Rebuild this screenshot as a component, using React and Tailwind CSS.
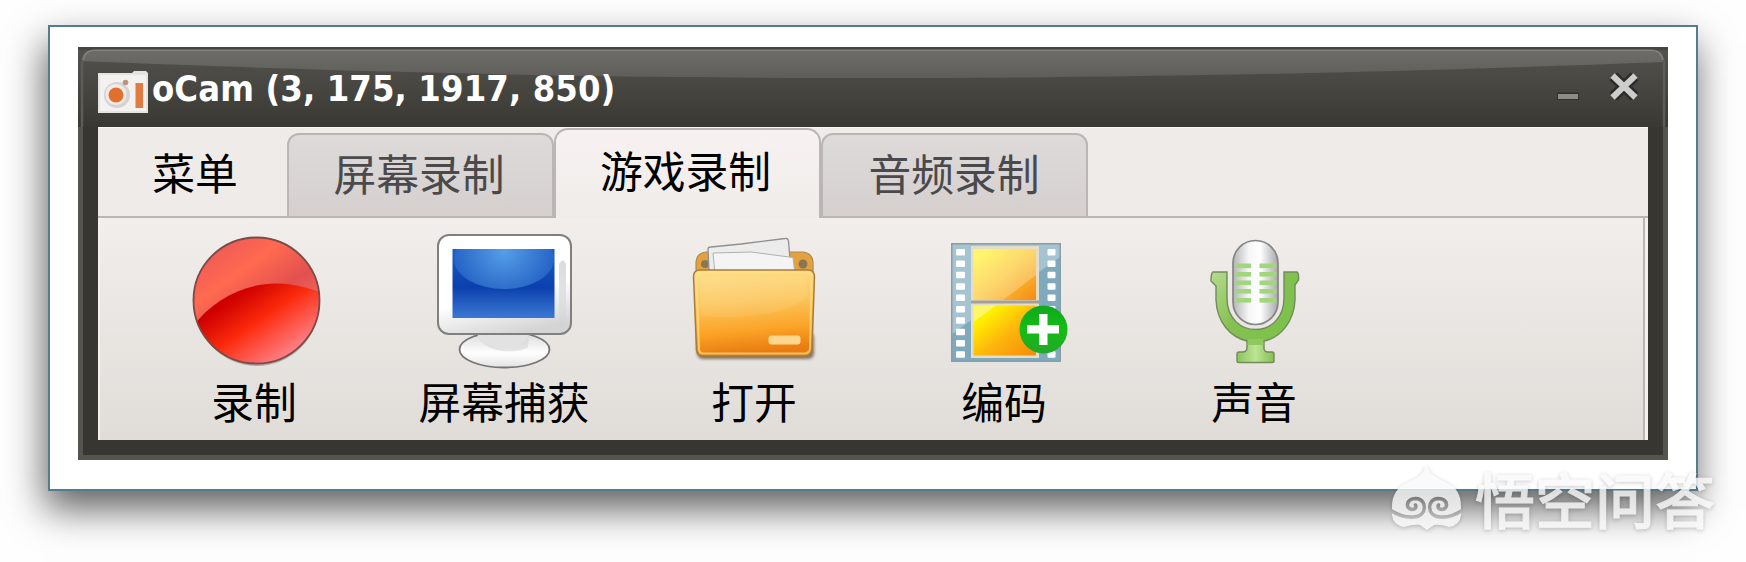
const cjk = "font-['Noto_Sans_CJK_SC',sans-serif]";

function AppLogo() {
  return (
    <svg className="h-[44px] w-[52px] shrink-0" viewBox="97 70 52 44">
      <path d="M98 73h34l2-2h12l2 2v40H98z" fill="#e6e3e3" />
      <path d="M100 75h46v36h-46z" fill="#f4f1f1" />
      <circle cx="117" cy="95" r="13" fill="#d6d3d4" />
      <circle cx="116" cy="94.500" r="10.500" fill="#f3ebe7" />
      <circle cx="116" cy="95" r="7.500" fill="#e0702c" />
      <circle cx="125.500" cy="82.500" r="2.800" fill="#c09284" />
      <rect x="135.500" y="83" width="7.500" height="25" fill="#e27a42" />
    </svg>
  );
}

function RecordIcon() {
  return (
    <svg className="h-[150px] w-[250px]" viewBox="129 225 250 150">
      <defs>
        <linearGradient id="recTop" x1="0.1" y1="0" x2="0.75" y2="0.9">
          <stop offset="0" stopColor="#e8525a" />
          <stop offset="0.35" stopColor="#ff6a50" />
          <stop offset="0.62" stopColor="#e2504f" />
          <stop offset="1" stopColor="#ff7a68" />
        </linearGradient>
        <linearGradient id="recLow" gradientUnits="userSpaceOnUse" x1="228" y1="290" x2="282" y2="368">
          <stop offset="0.1" stopColor="#cf0000" />
          <stop offset="0.45" stopColor="#fb2a0c" />
          <stop offset="0.9" stopColor="#ff7c80" />
        </linearGradient>
        <clipPath id="recClip"><circle cx="256.500" cy="300.500" r="63.500" /></clipPath>
      </defs>
      <ellipse cx="257" cy="304" rx="62" ry="62" fill="#000" opacity="0.25" />
      <g clipPath="url(#recClip)">
        <rect x="190" y="235" width="132" height="132" fill="url(#recTop)" />
        <path d="M190 330C210 302 240 284 276 283.500Q300 283.500 325 294V370H190z" fill="url(#recLow)" />
      </g>
      <circle cx="256.500" cy="300.500" r="63" fill="none" stroke="#7e4a46" strokeWidth="1.800" />
    </svg>
  );
}

function MonitorIcon() {
  return (
    <svg className="h-[150px] w-[250px]" viewBox="380 225 250 150">
      <defs>
        <linearGradient id="monScreen" x1="0" y1="0" x2="0" y2="1">
          <stop offset="0" stopColor="#1f5fc4" />
          <stop offset="0.55" stopColor="#0a40ae" />
          <stop offset="1" stopColor="#3c78d2" />
        </linearGradient>
        <radialGradient id="monGloss" gradientUnits="userSpaceOnUse" cx="505" cy="252" r="50">
          <stop offset="0" stopColor="#62aef2" />
          <stop offset="1" stopColor="#2a68c8" />
        </radialGradient>
        <linearGradient id="monBody" x1="0.3" y1="0" x2="0.6" y2="1">
          <stop offset="0.6" stopColor="#ffffff" />
          <stop offset="1" stopColor="#d4d4d4" />
        </linearGradient>
        <linearGradient id="monSide" x1="0" y1="0" x2="0" y2="1">
          <stop offset="0" stopColor="#d6d6d6" stopOpacity="0.9" />
          <stop offset="1" stopColor="#cfcfcf" stopOpacity="0.2" />
        </linearGradient>
        <linearGradient id="monBase" x1="0" y1="0" x2="0" y2="1">
          <stop offset="0" stopColor="#d8d8d8" />
          <stop offset="0.6" stopColor="#ffffff" />
          <stop offset="1" stopColor="#e2e2e2" />
        </linearGradient>
        <clipPath id="monClip"><rect x="453.500" y="249" width="102" height="69" /></clipPath>
      </defs>
      <ellipse cx="505.500" cy="349.500" rx="45" ry="18" fill="url(#monBase)" stroke="#747474" strokeWidth="1.800" />
      <path d="M478 333C483 354 525 354 530 333z" fill="#f4f4f4" />
      <path d="M479 336C486 354 520 354 529 347L530 334H479z" fill="#d0d0d0" opacity="0.5" />
      <rect x="439" y="235" width="133" height="99" rx="11" fill="url(#monBody)" stroke="#808080" strokeWidth="2" />
      <path d="M560 264Q564 257 567 264V318Q566 328 560 328z" fill="url(#monSide)" />
      <g clipPath="url(#monClip)">
        <rect x="453" y="249" width="103" height="69" fill="url(#monScreen)" />
        <ellipse cx="505" cy="259" rx="50" ry="30" fill="url(#monGloss)" opacity="0.8" />
      </g>
    </svg>
  );
}

function FolderIcon() {
  return (
    <svg className="h-[150px] w-[250px]" viewBox="630 225 250 150">
      <defs>
        <linearGradient id="folFront" x1="0" y1="0" x2="0.12" y2="1">
          <stop offset="0" stopColor="#fde08a" />
          <stop offset="0.4" stopColor="#fcc860" />
          <stop offset="0.75" stopColor="#fba326" />
          <stop offset="1" stopColor="#e87c10" />
        </linearGradient>
        <filter id="folBlur"><feGaussianBlur stdDeviation="1.800" /></filter>
      </defs>
      <rect x="698" y="332" width="117" height="27" rx="6" fill="#4c4436" opacity="0.7" filter="url(#folBlur)" />
      <path d="M697 275V262Q698 253 707 252H804Q813 253 814 262V275z" fill="#e3a140" stroke="#b08a4c" strokeWidth="1.200" />
      <circle cx="706" cy="264" r="4" fill="#8b7654" />
      <circle cx="804" cy="264" r="4.500" fill="#8b7654" />
      <path d="M709 249Q709 247 712 247L742 244L786 238.500Q789 238 789.500 241L792 272H710z" fill="#ececec" stroke="#8f8f8f" strokeWidth="1.300" />
      <path d="M714 253L752 252L794 257.500L796 274H716z" fill="#f4f4f4" stroke="#b0b0b0" strokeWidth="1" />
      <path d="M694.500 276Q695 270 701 270H809Q815 270 815.500 276L813 350Q812 356 806 356H704Q698 356 697.500 350z" fill="url(#folFront)" stroke="#a87c3c" strokeWidth="1.500" />
      <path d="M697.500 277Q698 272.500 702 272.500H808Q812.500 272.500 812.500 277L811 349Q810 353.500 805 353.500H705Q700 353.500 700 349z" fill="none" stroke="#ffdf8a" strokeWidth="2" opacity="0.7" />
      <path d="M702 316Q778 322 809 296L807 277H701z" fill="#fff" opacity="0.08" />
      <rect x="769.500" y="335.500" width="32" height="9" rx="3" fill="#ffd68c" />
    </svg>
  );
}

const holes = [249, 260.4, 271.8, 283.200, 294.500, 305.900, 317.300, 328.700, 340.100, 351.300];

function FilmIcon() {
  return (
    <svg className="h-[150px] w-[250px]" viewBox="880 225 250 150">
      <defs>
        <linearGradient id="filmTop" x1="0" y1="0" x2="1" y2="1">
          <stop offset="0.1" stopColor="#fff23c" />
          <stop offset="0.5" stopColor="#fcc93c" />
          <stop offset="1" stopColor="#f68a10" />
        </linearGradient>
        <linearGradient id="filmLow" x1="0" y1="0" x2="1" y2="1">
          <stop offset="0.2" stopColor="#fff000" />
          <stop offset="0.55" stopColor="#fdb60c" />
          <stop offset="1" stopColor="#f58a0c" />
        </linearGradient>
        <linearGradient id="addBadge" x1="0" y1="0" x2="0" y2="1">
          <stop offset="0" stopColor="#10a820" />
          <stop offset="0.5" stopColor="#14bc14" />
          <stop offset="1" stopColor="#22a828" />
        </linearGradient>
      </defs>
      <rect x="952" y="243" width="110" height="119" fill="#7fa9bd" />
      <path d="M953 244h108v13L953 334z" fill="#b4d0dc" opacity="0.7" />
      <rect x="952.750" y="243.750" width="108.500" height="117.500" fill="none" stroke="#8a9ca6" strokeWidth="1.500" />
      <rect x="972" y="246" width="68" height="112" fill="#e3ddc9" />
      <rect x="974.500" y="249" width="62.500" height="51" fill="url(#filmTop)" />
      <rect x="972" y="300.500" width="68" height="3" fill="#a89f92" />
      <rect x="974.500" y="305.500" width="62.500" height="50" fill="url(#filmLow)" />
      <path d="M974.500 249H1037V275L1004 300H974.500z" fill="#fff" opacity="0.25" />
      <path d="M974.500 305.500H997L974.500 322z" fill="#fff" opacity="0.4" />
      {holes.map((y) => (
        <g key={y} fill="#fff">
          <rect x="957" y={y} width="9" height="6.500" rx="1" />
          <rect x="1048.500" y={y} width="8" height="6.500" rx="1" />
        </g>
      ))}
      <circle cx="1044.500" cy="329.500" r="24" fill="url(#addBadge)" />
      <path d="M1040.200 314h8.300v11.300h11.500v8.300h-11.500V345h-8.300v-11.400H1028v-8.300h12.200z" fill="#fff" />
    </svg>
  );
}

const micBars = [265.500, 274, 282.500, 291, 300];

function MicIcon() {
  return (
    <svg className="h-[150px] w-[250px]" viewBox="1129 225 250 150">
      <defs>
        <linearGradient id="micArm" x1="0" y1="0" x2="1" y2="0.6">
          <stop offset="0" stopColor="#b6dc90" />
          <stop offset="0.5" stopColor="#86c050" />
          <stop offset="1" stopColor="#7cc24c" />
        </linearGradient>
        <linearGradient id="micStem" x1="0" y1="0" x2="1" y2="0">
          <stop offset="0" stopColor="#8cc45c" />
          <stop offset="0.5" stopColor="#bce494" />
          <stop offset="1" stopColor="#84c052" />
        </linearGradient>
        <linearGradient id="micHead" x1="0" y1="0" x2="1" y2="0">
          <stop offset="0" stopColor="#b4b4b6" />
          <stop offset="0.35" stopColor="#f6f6f6" />
          <stop offset="0.6" stopColor="#ffffff" />
          <stop offset="1" stopColor="#a8a8aa" />
        </linearGradient>
      </defs>
      <path d="M1247 336V348Q1247 352 1242 352H1239Q1237 352 1237 354V361Q1237 362.500 1239 362.500H1272Q1274 362.500 1274 361V354Q1274 352 1272 352H1268Q1264 352 1264 348V336z" fill="url(#micStem)" stroke="#728a5c" strokeWidth="1.400" />
      <path d="M1213 272H1227V298C1227 340 1284 340 1284 298V272H1297Q1299 273 1298.500 280L1295 285V300C1294 322 1280 338 1264 341H1247C1230 337 1217 322 1216 300V286L1211 281Q1211 273 1213 272z" fill="url(#micArm)" stroke="#728a5c" strokeWidth="1.400" />
      <path d="M1247.700 339H1263.300V345H1247.700z" fill="#8fc85e" />
      <rect x="1233" y="240.500" width="45" height="84" rx="22.500" fill="url(#micHead)" stroke="#858587" strokeWidth="1.700" />
      {micBars.map((y) => (
        <g key={y} fill="#a2d67c">
          <rect x="1236" y={y - 2} width="15" height="4.600" />
          <rect x="1259.500" y={y - 2} width="17" height="4.600" />
        </g>
      ))}
    </svg>
  );
}

const tools = [
  { label: "录制", Icon: RecordIcon },
  { label: "屏幕捕获", Icon: MonitorIcon },
  { label: "打开", Icon: FolderIcon },
  { label: "编码", Icon: FilmIcon },
  { label: "声音", Icon: MicIcon },
];

function TitleBar() {
  return (
    <header className="relative flex h-[80px] w-full shrink-0 items-center bg-linear-to-b from-[#53524e] via-[#474641] to-[#393833]">
      <svg className="absolute inset-0 h-[80px] w-full" viewBox="0 0 1590 80" preserveAspectRatio="none">
        <defs>
          <linearGradient id="gloss" x1="0" y1="0" x2="0" y2="1">
            <stop offset="0" stopColor="#6e6e69" />
            <stop offset="1" stopColor="#5e5d59" />
          </linearGradient>
        </defs>
        <rect width="1590" height="3" fill="#454440" />
        <path d="M4 16Q5 3 16 3H1574Q1585 3 1586 15C1250 28 1000 31 795 31S340 28 4 14z" fill="url(#gloss)" />
        <path d="M4 80V16Q5 3.500 16 3.500H1574Q1585 3.500 1586 16V80" fill="none" stroke="#5d5c58" strokeWidth="2.500" />
        <path d="M5 13Q7 3.500 16 3.500H1574Q1583 3.500 1585 13" fill="none" stroke="#85847f" strokeWidth="1.500" />
      </svg>
      <div className="relative flex w-full items-center pt-[9px] pl-[19px]">
        <AppLogo />
        <h1 className="-mt-[6px] ml-[3px] whitespace-nowrap font-['DejaVu_Sans_Condensed','DejaVu_Sans',sans-serif] text-[36px] leading-[44px] font-bold tracking-[0.1px] text-white [font-stretch:condensed]">
          oCam (3, 175, 1917, 850)
        </h1>
        <svg className="-mt-[6px] mr-[26px] ml-auto h-[40px] w-[90px]" viewBox="1552 68 90 40">
          <rect x="1557" y="91.500" width="22" height="7.500" fill="#32312d" />
          <rect x="1558" y="93" width="20" height="5" fill="#8c8b87" />
          <path d="M1613.500 75.500L1634.500 95.500M1634.500 75.500L1613.500 95.500" stroke="#2c2b28" strokeWidth="11" />
          <path d="M1612.500 74.500L1635.500 96.500M1635.500 74.500L1612.500 96.500" stroke="#cdcdcb" strokeWidth="6" />
        </svg>
      </div>
    </header>
  );
}

function Tabs() {
  return (
    <nav className={`flex h-[90px] shrink-0 items-end bg-[#efebe8] text-[42.8px] leading-[60px] ${cjk}`}>
      <button className="h-[90px] w-[189px] border-b-2 border-[#bbb6b3] pb-[3px] pl-[5px] text-black">菜单</button>
      <button className="h-[85px] w-[267px] rounded-t-[12px] border-2 border-[#bbb6b3] bg-linear-to-b from-[#dedada] to-[#d5d0ce] pr-[3px] pb-[8px] text-[#4a4a4c]">屏幕录制</button>
      <button className="h-[90px] w-[267px] rounded-t-[14px] border-2 border-b-0 border-[#bbb6b3] bg-linear-to-b from-[#f7f2f1] to-[#f0ece9] pr-[4px] pb-[10px] text-black">游戏录制</button>
      <button className="h-[85px] w-[267px] rounded-t-[12px] border-2 border-[#bbb6b3] bg-linear-to-b from-[#dedada] to-[#d5d0ce] pr-[1px] pb-[8px] text-[#4a4a4c]">音频录制</button>
      <div className="h-[90px] flex-1 border-b-2 border-[#bbb6b3]" />
    </nav>
  );
}

function Watermark() {
  return (
    <div className="absolute top-[461px] left-[1390px] flex items-center opacity-80 drop-shadow-[0_1px_2px_rgba(0,0,0,0.25)]">
      <svg className="h-[70px] w-[74px]" viewBox="1390 462 74 70">
        <defs>
          <mask id="swirls" maskUnits="userSpaceOnUse" x="1385" y="455" width="85" height="80">
            <rect x="1385" y="455" width="85" height="80" fill="#fff" />
            <g fill="none" stroke="#000" strokeWidth="3.600" strokeLinecap="round">
              <path d="M1390 509Q1402 517 1414 516C1428 515 1427 498 1416 497.500C1406 497.500 1405 508 1412 508.500Q1417 508 1415.500 504" />
              <path d="M1463 509Q1451 517 1440 516C1426 515 1427 498 1438 497.500C1448 497.500 1449 508 1442 508.500Q1437 508 1438.500 504" />
            </g>
          </mask>
        </defs>
        <path d="M1392 506C1392 494 1397 486 1408 481Q1423 476 1426 464Q1431 476 1446 481C1457 486 1461 494 1461 506V514Q1460 524 1449 526Q1440 523 1434 524L1427 529L1420 524Q1413 523 1404 526Q1393 524 1392 514z" fill="#f9f9f9" mask="url(#swirls)" />
      </svg>
      <span className={`ml-[11px] text-[60px] leading-[74px] font-medium whitespace-nowrap text-[#f9f9f9] [-webkit-text-stroke:1px_#f9f9f9] ${cjk}`}>悟空问答</span>
    </div>
  );
}

export default function App() {
  return (
    <main className="relative h-[562px] w-[1746px] overflow-hidden bg-[#fefefe] pt-[25px] pl-[48px]">
      <div className="h-[466px] w-[1650px] border-2 border-[#557b8e] bg-white pt-[20px] pl-[28px] shadow-[-3px_18px_36px_0_rgba(0,0,0,0.62)]">
        <section className="flex h-[413px] w-[1590px] flex-col bg-[#373631]">
          <TitleBar />
          <div className="flex h-[333px] flex-col border-x-[5px] border-b-[5px] border-[#55544f] px-[15px] pb-[15px]">
            <div className="flex h-[313px] w-[1550px] flex-col border-t border-[#fbf9f8] bg-[#f4f0ee]">
              <Tabs />
              <div className="flex flex-1 border-l-2 border-[#f4f0ee] pr-[3px]">
                <div className={`flex flex-1 border-r-2 border-[#bbb6b3] bg-linear-to-b from-[#f2eeeb] to-[#e0dcd8] pl-[29px] ${cjk}`}>
                  {tools.map(({ label, Icon }) => (
                    <button key={label} className="flex w-[250px] shrink-0 flex-col items-center pt-[7px] text-black">
                      <Icon />
                      <span className="-mt-[5px] text-[42.8px] leading-[60px] whitespace-nowrap">{label}</span>
                    </button>
                  ))}
                </div>
              </div>
            </div>
          </div>
        </section>
      </div>
      <Watermark />
    </main>
  );
}
